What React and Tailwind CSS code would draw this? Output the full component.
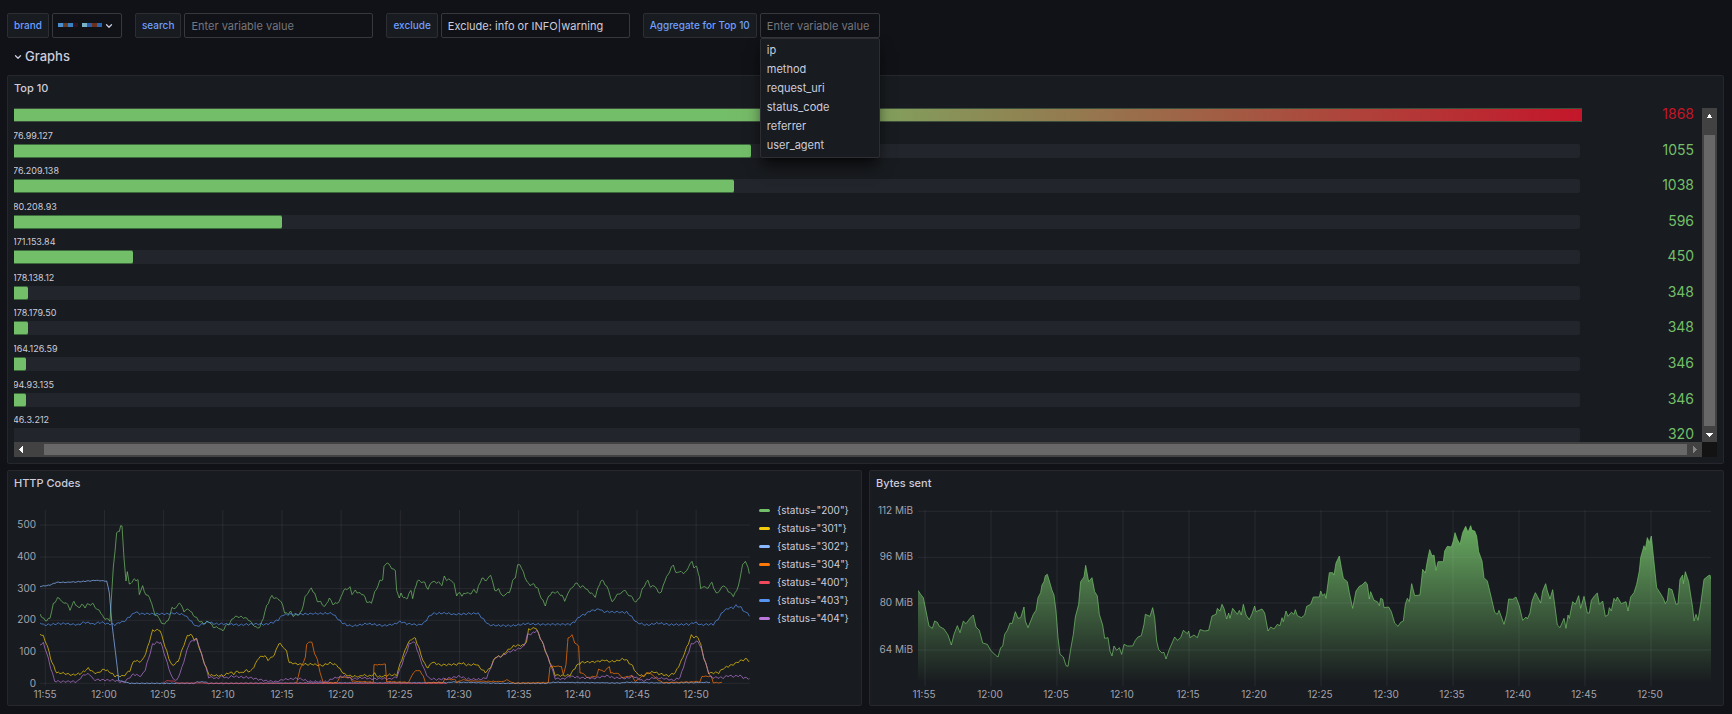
import React, { useState } from "react";
import { FiChevronDown } from "react-icons/fi";

const AGGREGATES = ["ip", "method", "request_uri", "status_code", "referrer", "user_agent"];

const TOP_ROWS = [
  { ip: "76.99.127", value: 1055 },
  { ip: "76.209.138", value: 1038 },
  { ip: "80.208.93", value: 596 },
  { ip: "171.153.84", value: 450 },
  { ip: "178.138.12", value: 348 },
  { ip: "178.179.50", value: 348 },
  { ip: "164.126.59", value: 346 },
  { ip: "94.93.135", value: 346 },
  { ip: "46.3.212", value: 320 },
];

const TIMES = ["11:55", "12:00", "12:05", "12:10", "12:15", "12:20", "12:25", "12:30", "12:35", "12:40", "12:45", "12:50"];

// Every series is a polyline in thirds of a pixel
const SERIES = [
  {
    name: '{status="200"}',
    color: "#73bf69",
    noise: 3,
    points:
      "120,447 126,460 140,469 150,460 160,420 172,402 180,403 190,418 198,413 210,436 222,412 235,432 245,420 255,428 262,420 280,420 292,438 298,437 310,460 330,468 340,310 350,207 358,200 362,182 366,188 372,280 378,350 382,325 388,357 396,357 403,340 408,350 414,348 418,388 428,366 438,392 448,396 455,420 466,452 478,460 485,480 494,476 504,470 516,432 530,430 538,413 552,440 566,434 580,452 600,472 615,478 625,470 640,488 655,490 668,500 676,486 690,475 702,458 718,457 730,459 745,465 758,480 768,490 780,488 790,460 800,425 816,393 824,403 834,402 848,420 854,447 866,447 872,443 880,454 898,450 905,440 915,400 924,384 934,372 944,388 952,410 962,414 974,428 988,402 1000,420 1018,412 1030,378 1050,370 1056,388 1066,380 1080,388 1090,390 1100,412 1114,416 1124,385 1140,350 1148,345 1152,308 1162,293 1170,306 1186,320 1190,375 1198,404 1203,385 1210,401 1222,401 1233,376 1238,402 1244,378 1252,348 1264,352 1274,355 1284,376 1294,352 1316,355 1326,362 1333,338 1340,346 1354,347 1362,360 1370,392 1380,385 1386,394 1400,384 1408,390 1422,378 1430,384 1436,366 1446,340 1454,348 1464,344 1472,330 1484,378 1496,376 1510,398 1518,386 1528,386 1538,350 1546,338 1553,304 1560,300 1570,325 1582,355 1590,362 1602,360 1614,375 1624,402 1636,422 1646,396 1656,385 1672,384 1686,394 1694,408 1704,390 1710,372 1718,372 1726,354 1742,368 1752,366 1762,378 1770,384 1786,397 1794,372 1802,350 1810,350 1826,378 1836,415 1846,398 1856,388 1866,386 1874,374 1882,392 1890,392 1896,400 1908,414 1920,396 1928,372 1944,348 1952,370 1962,362 1974,382 1984,386 1990,360 2004,330 2020,300 2028,328 2038,320 2046,326 2060,322 2066,304 2076,293 2082,308 2090,308 2098,335 2102,375 2112,364 2120,374 2136,355 2148,388 2160,378 2170,362 2190,386 2200,394 2210,380 2220,345 2228,298 2236,294 2244,306 2248,328",
  },
  {
    name: '{status="301"}',
    color: "#f2cc0c",
    noise: 3,
    points:
      "120,508 130,516 142,545 156,595 170,625 190,627 215,632 240,628 254,620 265,612 280,624 292,627 312,615 328,622 345,635 370,635 390,618 402,588 415,592 426,590 438,565 458,498 480,497 490,530 506,580 516,604 534,592 552,540 562,515 572,510 582,524 590,525 604,570 622,620 630,633 670,634 690,624 702,628 712,620 722,626 740,618 752,622 766,600 776,580 794,574 804,586 812,582 824,570 836,536 848,546 860,562 868,595 900,600 940,600 965,604 990,596 1010,602 1024,620 1036,632 1060,636 1078,637 1088,632 1110,636 1124,628 1134,638 1150,636 1164,632 1190,632 1200,600 1222,540 1234,524 1246,522 1258,555 1270,592 1284,612 1294,594 1310,598 1320,602 1370,600 1386,596 1400,602 1430,600 1446,616 1456,624 1470,612 1486,578 1506,575 1520,560 1542,545 1572,542 1580,530 1586,495 1608,490 1616,510 1630,542 1644,582 1654,602 1666,632 1686,634 1710,632 1730,604 1744,594 1790,592 1816,587 1826,592 1850,590 1862,586 1874,584 1882,590 1898,606 1910,628 1930,636 1940,628 1960,622 1976,628 2006,634 2026,625 2044,590 2060,550 2074,514 2082,518 2094,518 2102,540 2112,582 2126,626 2156,625 2170,612 2200,600 2220,590 2240,584 2248,590",
  },
  {
    name: '{status="302"}',
    color: "#8ab8ff",
    noise: 1,
    points:
      "120,366 150,362 170,354 200,354 240,352 290,348 320,350 328,385 336,480 346,560 356,648 370,652 390,657 580,657 592,653 615,653 625,657 1340,655 1360,653 1500,657 1640,657 1660,654 1860,656 1880,654 2000,656 2130,654",
  },
  {
    name: '{status="304"}',
    color: "#ff780a",
    noise: 1,
    points:
      "890,655 900,615 910,594 916,580 920,540 926,533 936,534 944,570 952,584 960,625 970,655 1010,655 1020,638 1052,640 1056,650 1090,652 1120,654 1122,602 1156,600 1160,652 1226,654 1236,632 1248,618 1260,620 1270,636 1276,655 1330,654 1334,645 1366,646 1370,654 1390,646 1410,650 1510,652 1520,646 1540,656 1645,655 1650,606 1684,606 1690,632 1698,600 1704,522 1716,512 1724,535 1736,545 1740,625 1754,630 1760,640 1772,638 1790,636 1796,614 1812,622 1828,606 1832,626 1856,628 1866,640 1896,634 1906,652 1920,640 1946,624 1960,634 1976,648 1990,655 2100,652 2106,636 2134,636 2140,655 2166,655",
  },
  {
    name: '{status="400"}',
    color: "#f2495c",
    noise: 0,
    points: "490,656 500,649 520,650 530,656 700,657 1340,657",
  },
  {
    name: '{status="403"}',
    color: "#5794f2",
    noise: 3,
    points:
      "120,474 130,482 150,481 170,478 200,478 235,482 250,474 270,476 280,480 290,476 306,474 320,478 345,481 360,474 372,472 385,460 396,452 404,443 420,448 440,448 460,449 490,449 530,447 552,451 565,462 580,478 590,487 610,478 625,472 640,478 700,480 720,482 760,479 800,480 820,474 835,466 848,452 870,450 940,448 996,447 1010,460 1024,474 1040,482 1060,485 1100,478 1120,480 1150,484 1180,480 1200,472 1220,478 1260,482 1274,474 1286,458 1298,448 1336,446 1360,450 1434,447 1446,460 1466,482 1510,484 1540,484 1580,478 1610,480 1710,480 1724,472 1740,455 1755,450 1770,440 1800,434 1808,442 1880,444 1890,452 1910,475 1940,482 1976,476 2010,481 2070,480 2084,474 2100,481 2140,480 2154,464 2170,440 2184,432 2200,430 2208,424 2224,430 2236,446 2244,444 2248,456",
  },
  {
    name: '{status="404"}',
    color: "#b877d9",
    noise: 3,
    points:
      "120,540 130,537 140,565 152,610 164,650 180,652 232,652 246,636 256,630 270,630 280,646 340,648 370,654 386,642 400,630 424,635 436,615 458,540 470,535 482,534 492,565 506,610 516,640 530,650 546,610 568,535 588,524 596,540 608,580 626,638 650,642 668,636 680,642 694,636 750,640 780,646 800,650 830,652 850,645 896,642 930,652 980,652 1000,642 1016,638 1034,636 1060,644 1090,640 1120,644 1150,642 1170,644 1190,638 1202,610 1228,540 1238,532 1246,538 1256,570 1270,610 1286,642 1310,645 1340,643 1380,636 1400,644 1440,645 1460,640 1472,610 1486,580 1506,576 1520,566 1540,558 1560,552 1572,546 1582,512 1600,506 1610,498 1616,510 1632,545 1644,580 1658,620 1666,642 1690,644 1710,636 1740,640 1780,642 1820,634 1840,640 1880,642 1900,636 1930,650 1960,640 1990,642 2020,648 2040,640 2056,590 2074,540 2094,530 2106,560 2118,600 2132,640 2170,640 2184,634 2200,636 2220,634 2230,640 2248,642",
  },
];

const BYTES =
  "532,378 540,390 548,400 556,440 565,485 575,492 582,470 590,474 596,486 610,494 622,512 632,542 640,510 650,484 658,505 668,470 676,478 688,462 698,452 706,488 716,498 726,536 740,540 750,558 764,572 772,578 780,550 786,546 792,510 800,498 808,476 814,478 824,442 832,462 840,460 850,428 854,470 862,490 870,470 878,450 886,438 892,400 900,385 904,362 910,352 914,334 920,330 926,350 934,378 940,392 946,440 952,520 958,570 968,578 976,604 982,606 990,555 998,510 1004,458 1014,420 1020,352 1030,338 1035,303 1044,352 1054,340 1062,382 1070,395 1076,450 1086,482 1092,522 1102,520 1108,560 1114,575 1120,545 1128,558 1136,550 1143,570 1150,540 1160,545 1176,545 1184,528 1192,518 1202,514 1210,480 1214,450 1228,456 1236,430 1242,460 1248,530 1254,556 1264,566 1270,564 1276,584 1286,555 1302,518 1310,528 1320,520 1328,498 1340,508 1344,500 1348,520 1360,512 1370,520 1378,496 1392,500 1404,498 1414,455 1426,450 1430,432 1438,440 1444,420 1450,432 1458,464 1464,446 1468,462 1476,432 1490,450 1496,438 1502,452 1508,420 1516,452 1526,466 1534,448 1542,425 1546,442 1564,434 1572,446 1582,500 1590,488 1600,494 1610,480 1618,484 1624,460 1628,472 1636,440 1642,456 1652,444 1660,450 1664,436 1670,454 1682,460 1692,452 1698,426 1710,420 1718,398 1736,398 1740,380 1746,394 1752,388 1756,402 1766,325 1776,325 1780,332 1786,296 1796,275 1802,310 1808,342 1820,352 1826,385 1836,432 1846,380 1856,366 1864,362 1874,352 1880,360 1886,404 1890,382 1900,408 1910,412 1916,424 1920,402 1926,405 1930,430 1944,428 1952,442 1962,476 1972,486 1980,474 1988,470 1994,420 2000,402 2006,412 2013,358 2022,394 2038,392 2046,315 2054,326 2060,290 2067,256 2074,275 2080,272 2086,318 2092,292 2108,292 2112,260 2120,246 2132,248 2138,230 2143,205 2150,225 2158,240 2166,205 2175,186 2182,204 2190,184 2194,198 2202,200 2208,215 2214,262 2224,290 2230,340 2240,350 2250,392 2262,444 2270,450 2275,438 2290,480 2298,450 2304,404 2316,405 2326,398 2336,425 2346,468 2356,458 2360,464 2368,446 2374,410 2384,385 2390,396 2400,416 2406,380 2415,358 2420,380 2428,404 2436,376 2442,420 2450,482 2458,490 2470,462 2476,492 2482,452 2486,462 2496,412 2504,420 2514,394 2520,432 2530,396 2540,446 2546,446 2552,408 2562,394 2570,386 2576,420 2586,410 2594,456 2602,452 2606,430 2612,440 2620,402 2626,410 2630,398 2642,418 2656,412 2662,440 2670,398 2680,385 2688,360 2696,320 2700,280 2710,244 2714,255 2720,220 2726,235 2732,215 2738,275 2748,370 2756,382 2768,402 2774,418 2780,408 2784,372 2794,376 2806,420 2812,418 2818,345 2826,332 2828,358 2834,322 2844,352 2850,392 2856,430 2860,470 2866,450 2872,468 2880,420 2890,345 2902,335 2908,332 2911,345";

// Fill in the samples between the recorded points, with a little repeatable noise
const resample = (points, noise) => {
  const pts = points.split(" ").map((p) => p.split(",").map(Number));
  const out = [];
  for (let i = 0; i < pts.length - 1; i++) {
    const [x0, y0] = pts[i];
    const [x1, y1] = pts[i + 1];
    for (let x = x0; x < x1; x += 5) {
      const y = y0 + ((y1 - y0) * (x - x0)) / (x1 - x0);
      out.push(`${x},${Math.round(y + noise * Math.sin(x * 12.9898))}`);
    }
  }
  out.push(pts[pts.length - 1].join(","));
  return out.join(" ");
};

const Variable = ({ id, label, children }) => (
  <div className="flex h-full gap-[3px]">
    <label
      htmlFor={id}
      className="flex items-center rounded-xs border border-[#2c2e34] bg-[#181b1f] px-1.5 text-[10px] font-medium whitespace-nowrap text-[#6e9fff]"
    >
      {label}
    </label>
    {children}
  </div>
);

const inputClass =
  "block h-full rounded-xs border border-[#36383e] bg-[#111217] px-1.5 text-[11px] text-[#ccccdc] outline-none placeholder:text-[#75767e]";

const Panel = ({ title, className = "", children }) => (
  <section className={`rounded-xs border border-[#25272c] bg-[#181b1f] px-1.5 ${className}`}>
    <h2 className="flex h-6 items-center text-[11px] font-medium">{title}</h2>
    {children}
  </section>
);

const Arrow = ({ d, color = "#ffffff" }) => (
  <svg className="shrink-0" width="15" height="15" viewBox="0 0 15 15" aria-hidden="true">
    <path d={d} fill={color} />
  </svg>
);

const barWidth = (value) => `${Math.max(0, ((value - 334) / 1532) * 100)}%`;

const TopTen = () => (
  <div className="mt-2 mb-1.5 grid grid-cols-[minmax(0,1fr)_15px] grid-rows-[334px_15px]">
    <div className="flex flex-col overflow-x-clip">
      <div className="flex h-3.5 shrink-0 items-start pr-2">
        <div className="h-full flex-1">
          <div
            className="h-full border-y border-[#3c4f3b] bg-linear-to-r/srgb from-[#73bf69] from-45% to-[#c4162a] to-100%"
            style={{ width: barWidth(1868) }}
          />
        </div>
        <span className="w-[114px] text-right text-[14px] leading-3 text-[#c4162a]">1868</span>
      </div>
      {TOP_ROWS.map((row) => (
        <div key={row.ip} className="flex min-h-0 flex-1 flex-col justify-end">
          <span className="-ml-px text-[9px] leading-4">{row.ip}</span>
          <div className="flex h-3.5 items-start pr-2">
            <div className="h-full flex-1 rounded-r-xs bg-[#22252b]">
              {row.value > 334 && (
                <div
                  className="h-full rounded-r-xs border-y border-[#3c6b3b] bg-[#73bf69]"
                  style={{ width: barWidth(row.value) }}
                />
              )}
            </div>
            <span className="w-[114px] text-right text-[14px] leading-3 text-[#73bf69]">{row.value}</span>
          </div>
        </div>
      ))}
    </div>

    {/* Vertical scrollbar */}
    <div className="flex flex-col bg-[#424242]">
      <Arrow d="M7 6h1v1h1v2h1v1H5V9h1V7h1z" />
      <div className="mx-0.5 mt-3 mb-px flex-1 bg-[#686868]" />
      <Arrow d="M4 6h7v1h-1v1H9v1H8v1H7V9H6V8H5V7H4z" />
    </div>

    {/* Horizontal scrollbar */}
    <div className="flex bg-[#424242]">
      <Arrow d="M9 4v7H8v-1H7V9H6V8H5V7h1V6h1V5h1V4z" />
      <div className="my-0.5 ml-[15px] flex-1 bg-[#686868]" />
      <Arrow d="M6 4v7h1v-1h1V9h1V8h1V7H9V6H8V5H7V4z" color="#858585" />
    </div>
    <div className="bg-[#131313]" />
  </div>
);

const gridLine = "rgba(204,204,220,0.09)";

const HttpCodes = () => (
  <div className="flex items-start">
    <svg className="h-auto min-w-0 flex-1" viewBox="0 0 739 206" role="img" aria-label="HTTP Codes">
      <g fontSize="10" fill="#a3a4af">
        {[0, 100, 200, 300, 400, 500].map((v, i) => (
          <text key={v} x="22" y={[192, 160, 128, 97, 65, 33][i]} textAnchor="end">
            {v}
          </text>
        ))}
        {TIMES.map((t, i) => (
          <text key={t} x={31 + Math.round(i * 59.2)} y="203" textAnchor="middle">
            {t}
          </text>
        ))}
      </g>
      <svg x="26" y="15" width="710" height="176" viewBox="120 137 2130 528">
        <g stroke={gridLine} strokeWidth="3">
          {[182, 278, 373, 468, 562, 657].map((y) => (
            <path key={y} d={`M120 ${y}H2250`} />
          ))}
          {TIMES.map((t, i) => (
            <path key={t} d={`M${136 + i * 177.5} 137V665`} />
          ))}
        </g>
        {SERIES.map((s) => (
          <polyline
            key={s.name}
            points={resample(s.points, s.noise)}
            fill="none"
            stroke={s.color}
            strokeOpacity="0.7"
            strokeWidth="3"
          />
        ))}
      </svg>
    </svg>
    <ul className="w-[102px] pt-1.5 pl-1.5">
      {SERIES.map((s) => (
        <li key={s.name} className="flex h-[18px] items-center gap-[7px] text-[10px]">
          <span className="h-[3px] w-[11px] rounded-full" style={{ backgroundColor: s.color }} />
          {s.name}
        </li>
      ))}
    </ul>
  </div>
);

const BytesSent = () => (
  <svg className="h-auto w-full" viewBox="0 0 841 206" role="img" aria-label="Bytes sent">
    <defs>
      <linearGradient id="bytes-fill" gradientUnits="userSpaceOnUse" x1="0" y1="137" x2="0" y2="655">
        <stop offset="0" stopColor="#73bf69" stopOpacity="0.95" />
        <stop offset="1" stopColor="#73bf69" stopOpacity="0" />
      </linearGradient>
    </defs>
    <g fontSize="10" fill="#a3a4af">
      {["112 MiB", "96 MiB", "80 MiB", "64 MiB"].map((label, i) => (
        <text key={label} x="37" y={[19, 65, 111, 158][i]} textAnchor="end">
          {label}
        </text>
      ))}
      {TIMES.map((t, i) => (
        <text key={t} x={48 + i * 66} y="203" textAnchor="middle">
          {t}
        </text>
      ))}
    </g>
    <svg x="42" y="15" width="793" height="176" viewBox="532 137 2379 528">
      <polygon points={`532,655 ${BYTES} 2911,655`} fill="url(#bytes-fill)" />
      <polyline points={BYTES} fill="none" stroke="#73bf69" strokeOpacity="0.7" strokeWidth="3" />
      <g stroke={gridLine} strokeWidth="3">
        {[141, 279, 416, 557].map((y) => (
          <path key={y} d={`M532 ${y}H2911`} />
        ))}
        {TIMES.map((t, i) => (
          <path key={t} d={`M${553 + i * 198} 137V665`} />
        ))}
      </g>
    </svg>
  </svg>
);

// Pixelated brand name shown inside the select
const BrandMosaic = () => (
  <svg className="pointer-events-none absolute top-[9px] left-[5px]" width="44" height="4" aria-hidden="true">
    {["#4a8fd0", "#6a3d20", "#3b80c2", "#2e141c"].map((c, i) => (
      <rect key={c} x={i * 5} width="5" height="4" fill={c} />
    ))}
    {["#7ab0c8", "#2b5ca8", "#6b2f1c", "#2b66b0"].map((c, i) => (
      <rect key={c} x={24 + i * 5} width="5" height="4" fill={c} />
    ))}
  </svg>
);

const App = () => {
  const [search, setSearch] = useState("");
  const [exclude, setExclude] = useState("info or INFO|warning");
  const [aggregate, setAggregate] = useState("");

  return (
    <main className="min-h-screen bg-[#111217] pt-[13px] pr-2 pb-1.5 pl-[7px] font-[Inter,sans-serif] text-[#ccccdc]">
      {/* Dashboard variables */}
      <div className="flex h-[25px] gap-[13px]">
        <Variable id="brand" label="brand">
          <div className="relative w-[70px] rounded-xs border border-[#36383e]">
            <select id="brand" className="block h-full w-full appearance-none bg-transparent outline-none">
              <option value="all"></option>
            </select>
            <BrandMosaic />
            <FiChevronDown className="pointer-events-none absolute top-[7px] right-[7px]" size={10} strokeWidth={3} />
          </div>
        </Variable>
        <Variable id="search" label="search">
          <input
            id="search"
            className={`${inputClass} w-[189px]`}
            placeholder="Enter variable value"
            value={search}
            onChange={(e) => setSearch(e.target.value)}
          />
        </Variable>
        <Variable id="exclude" label="exclude">
          <input
            id="exclude"
            className={`${inputClass} w-[189px]`}
            value={`Exclude: ${exclude}`}
            onChange={(e) => setExclude(e.target.value.replace("Exclude: ", ""))}
          />
        </Variable>
        <Variable id="aggregate" label="Aggregate for Top 10">
          <div className="relative">
            <input
              id="aggregate"
              className={`${inputClass} w-[120px]`}
              placeholder="Enter variable value"
              value={aggregate}
              onChange={(e) => setAggregate(e.target.value)}
            />
            <ul className="absolute top-full left-0 z-10 w-full rounded-xs border border-[#2c2e34] bg-[#181b1f] py-0.5 shadow-lg shadow-black/60">
              {AGGREGATES.map((name) => (
                <li key={name}>
                  <button
                    type="button"
                    onClick={() => setAggregate(name)}
                    className="block h-[19px] w-full px-1.5 text-left text-[11px]"
                  >
                    {name}
                  </button>
                </li>
              ))}
            </ul>
          </div>
        </Variable>
      </div>

      <button type="button" className="flex h-[37px] items-center gap-0.5 pl-1.5 text-[13px] font-medium">
        <FiChevronDown size={10} strokeWidth={3} />
        Graphs
      </button>

      <Panel title="Top 10">
        <TopTen />
      </Panel>

      <div className="mt-1.5 grid grid-cols-2 gap-[7px]">
        <Panel title="HTTP Codes" className="pb-1">
          <HttpCodes />
        </Panel>
        <Panel title="Bytes sent" className="pb-1">
          <BytesSent />
        </Panel>
      </div>
    </main>
  );
};

export default App;
